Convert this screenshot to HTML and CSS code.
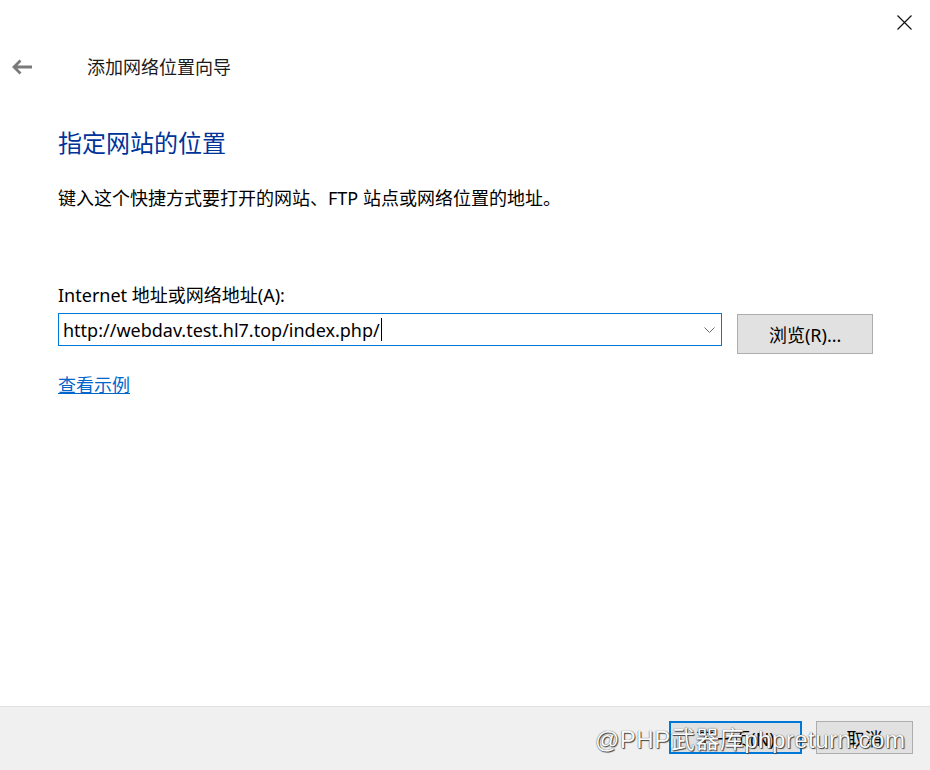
FILE: index.html
```html
<!DOCTYPE html>
<html lang="zh-CN">
<head>
    <meta charset="UTF-8">
    <title>添加网络位置向导</title>
    <link rel="stylesheet" href="styles.css">
</head>
<body>
    <div class="wizard">
        <div class="titlebar">
            <svg class="close-icon" width="15" height="15" viewBox="0 0 15 15">
                <path d="M0.5 0.5 L14.5 14.5 M14.5 0.5 L0.5 14.5" stroke="#111" stroke-width="1.2" fill="none"/>
            </svg>
        </div>

        <div class="nav">
            <svg class="back-icon" width="20" height="16" viewBox="0 0 20 16">
                <path d="M8.5 1.5 L2 8 L8.5 14.5 M2 8 L20 8" stroke="#7a7a7a" stroke-width="2.8" fill="none"/>
            </svg>
            <span class="nav-title">添加网络位置向导</span>
        </div>

        <div class="content">
            <h1>指定网站的位置</h1>
            <p class="intro">键入这个快捷方式要打开的网站、FTP 站点或网络位置的地址。</p>

            <label class="field-label">Internet 地址或网络地址(A):</label>
            <div class="field-row">
                <div class="combo">
                    <span class="combo-text">http://webdav.test.hl7.top/index.php/</span><span class="caret"></span>
                    <svg class="chevron" width="11" height="6" viewBox="0 0 11 6">
                        <path d="M0.5 0.5 L5.5 5.5 L10.5 0.5" stroke="#6a6a6a" stroke-width="1" fill="none"/>
                    </svg>
                </div>
                <button class="btn browse">浏览(R)...</button>
            </div>

            <a class="example-link" href="#">查看示例</a>
        </div>

        <div class="footer">
            <button class="btn btn-next">下一页(N)</button>
            <button class="btn btn-cancel">取消</button>
            <!-- watermark from the source image -->
            <div class="watermark">@PHP武器库phpreturn.com</div>
        </div>
    </div>
</body>
</html>
```

FILE: styles.css
```css
body {
    margin: 0;
    background: #fff;
    font-family: "Noto Sans", "Noto Sans CJK SC", sans-serif;
    color: #000;
}

.wizard {
    display: flex;
    flex-direction: column;
    height: 770px;
    width: 930px;
}

.titlebar {
    height: 44px;
    display: flex;
    justify-content: flex-end;
    align-items: flex-start;
}

.close-icon {
    margin-top: 15px;
    margin-right: 18px;
}

.nav {
    height: 46px;
    display: flex;
    align-items: center;
}

.back-icon {
    margin-left: 12px;
}

.nav-title {
    margin-left: 55px;
    font-size: 18px;
    line-height: 26px;
    color: #1a1a1a;
}

.content {
    padding: 0 57px 0 58px;
}

h1 {
    margin: 37px 0 0;
    font-size: 24px;
    line-height: 32px;
    font-weight: normal;
    color: #003399;
}

.intro {
    margin: 26px 0 0;
    font-size: 18px;
    line-height: 26px;
}

.field-label {
    display: block;
    margin-top: 71px;
    font-size: 18px;
    line-height: 26px;
}

.field-row {
    display: flex;
    align-items: flex-start;
    gap: 15px;
    margin-top: 5px;
}

.combo {
    position: relative;
    box-sizing: border-box;
    width: 666px;
    height: 33px;
    border: 1px solid #0078d7;
    display: flex;
    align-items: center;
    padding-left: 4px;
    font-size: 18px;
}

.combo-text {
    line-height: 26px;
}

.caret {
    display: inline-block;
    width: 1px;
    height: 23px;
    background: #000;
    margin-left: 1px;
}

.chevron {
    position: absolute;
    right: 6px;
    top: 13px;
}

.btn {
    box-sizing: border-box;
    background: #e1e1e1;
    border: 1px solid #adadad;
    font-family: "Noto Sans", "Noto Sans CJK SC", sans-serif;
    font-size: 18px;
    color: #000;
    padding: 0;
}

.browse {
    width: 136px;
    height: 40px;
    margin-top: 1px;
}

.example-link {
    display: inline-block;
    margin-top: 18px;
    font-size: 18px;
    line-height: 26px;
    color: #0066cc;
    text-decoration: underline;
}

.footer {
    position: relative;
    margin-top: auto;
    height: 64px;
    box-sizing: border-box;
    border-top: 1px solid #dfdfdf;
    background: #f0f0f0;
    display: flex;
    justify-content: flex-end;
    align-items: flex-start;
    gap: 14px;
    padding: 14px 17px 0 0;
}

.btn-next {
    width: 133px;
    height: 33px;
    border: 2px solid #0078d7;
}

.btn-cancel {
    width: 97px;
    height: 33px;
}

.watermark {
    position: absolute;
    left: 595px;
    top: 18px;
    font-family: "Liberation Sans", "Noto Sans CJK SC", sans-serif;
    font-size: 24px;
    line-height: 30px;
    letter-spacing: 0.5px;
    color: #fbfbfb;
    text-shadow: 0 0 1px #222, 1px 1px 1px #444;
    white-space: nowrap;
    pointer-events: none;
}
```
